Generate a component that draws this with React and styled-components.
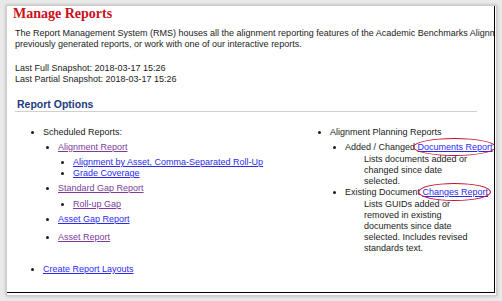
import React from "react";
import styled, { createGlobalStyle } from "styled-components";

const GlobalStyle = createGlobalStyle`
  html, body {
    margin: 0;
    padding: 0;
  }
  body {
    width: 502px;
    height: 301px;
    overflow: hidden;
    background: #e9e9e9;
    font-family: "Liberation Sans", Arial, sans-serif;
  }
`;

function ReportLink({ visited, children }) {
  return (
    <Link href="#" $visited={visited} onClick={(e) => e.preventDefault()}>
      {children}
    </Link>
  );
}

function ManageReports() {
  return (
    <>
      <GlobalStyle />
      <Frame>
        <Panel>
          <Title>Manage Reports</Title>
          <Intro>
            The Report Management System (RMS) houses all the alignment reporting features of the
            Academic Benchmarks Alignment Tool. Use it to request new reports, download
            <br />
            previously generated reports, or work with one of our interactive reports.
          </Intro>
          <Snapshots>
            Last Full Snapshot: 2018-03-17 15:26
            <br />
            Last Partial Snapshot: 2018-03-17 15:26
          </Snapshots>
          <Section>
            <SectionTitle>Report Options</SectionTitle>
            <Columns>
              <TopList>
                <Item>
                  Scheduled Reports:
                  <SubList>
                    <Item $gap={4}>
                      <ReportLink visited>Alignment Report</ReportLink>
                      <SubList>
                        <Item $gap={4}>
                          <ReportLink>Alignment by Asset, Comma-Separated Roll-Up</ReportLink>
                        </Item>
                        <Item>
                          <ReportLink>Grade Coverage</ReportLink>
                        </Item>
                      </SubList>
                    </Item>
                    <Item $gap={4}>
                      <ReportLink visited>Standard Gap Report</ReportLink>
                      <SubList>
                        <Item $gap={5}>
                          <ReportLink visited>Roll-up Gap</ReportLink>
                        </Item>
                      </SubList>
                    </Item>
                    <Item $gap={4}>
                      <ReportLink>Asset Gap Report</ReportLink>
                    </Item>
                    <Item $gap={7}>
                      <ReportLink visited>Asset Report</ReportLink>
                    </Item>
                  </SubList>
                </Item>
                <Item $gap={21}>
                  <ReportLink>Create Report Layouts</ReportLink>
                </Item>
              </TopList>

              <TopList>
                <Item>
                  Alignment Planning Reports
                  <SubList>
                    <Item $gap={4}>
                      <Lead>
                        Added / Changed <Circled href="#">Documents Report</Circled>
                      </Lead>
                      <Desc>Lists documents added or changed since date selected.</Desc>
                    </Item>
                    <Item>
                      <Lead>
                        Existing Document <Circled href="#">Changes Report</Circled>
                      </Lead>
                      <Desc>
                        Lists GUIDs added or removed in existing documents since date selected.
                        Includes revised standards text.
                      </Desc>
                    </Item>
                  </SubList>
                </Item>
              </TopList>
            </Columns>
          </Section>
        </Panel>
      </Frame>
    </>
  );
}

const Frame = styled.div`
  box-sizing: border-box;
  width: 491px;
  height: 291px;
  margin: 5px 0 0 6px;
  padding: 0 1px 2px 0;
  background: #fff;
  border: 1px solid #cdcdcd;
  box-shadow: 0 0 3px rgba(0, 0, 0, 0.25);
`;

const Panel = styled.div`
  box-sizing: border-box;
  height: 100%;
  padding-left: 8px;
  border-right: 1px solid #000;
  border-bottom: 1px solid #000;
  overflow: hidden;
  color: #1b1b1b;
  font-size: 9px;
  line-height: 11px;
`;

const Title = styled.h1`
  margin: 0 0 0 -2px;
  font-family: "Liberation Serif", "Times New Roman", serif;
  font-size: 14px;
  line-height: 15px;
  font-weight: bold;
  color: #cc1020;
`;

const Intro = styled.p`
  margin: 7px 0 0;
  white-space: nowrap;
`;

const Snapshots = styled.p`
  margin: 13px 0 0;
`;

const Section = styled.div`
  width: 462px;
  margin-top: 13px;
`;

const SectionTitle = styled.h2`
  margin: 0;
  padding: 0 0 1px 2px;
  border-bottom: 1px solid #d0d0d0;
  font-size: 10.5px;
  line-height: 12px;
  font-weight: bold;
  color: #1d3a82;
`;

const Columns = styled.div`
  display: grid;
  grid-template-columns: 287px minmax(0, 1fr);
  margin-top: 15px;
`;

const TopList = styled.ul`
  margin: 0;
  padding-left: 28px;
  list-style: disc;
`;

const SubList = styled.ul`
  margin: 0;
  padding-left: 15px;
  list-style: disc;
`;

const Item = styled.li`
  margin-top: ${(props) => props.$gap || 0}px;
`;

const Link = styled.a`
  color: ${(props) => (props.$visited ? "#7d3c9c" : "#2b2bf0")};
  text-decoration: underline;
`;

const Lead = styled.div`
  white-space: nowrap;
`;

const Circled = styled.a`
  position: relative;
  color: #2b2bf0;
  text-decoration: underline;

  &::after {
    content: "";
    position: absolute;
    left: -5px;
    right: -3px;
    top: -4px;
    bottom: -4px;
    border: 1.5px solid #c3122e;
    border-radius: 50%;
  }
`;

const Desc = styled.div`
  margin-top: 1px;
  padding-left: 19px;
`;

export default ManageReports;
